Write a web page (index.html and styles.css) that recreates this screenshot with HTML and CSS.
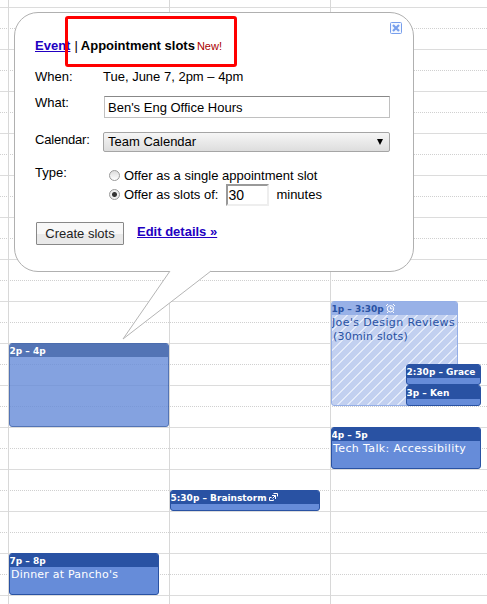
FILE: index.html
```html
<!DOCTYPE html>
<html lang="en">
<head>
<meta charset="utf-8">
<title>Calendar</title>
<link rel="stylesheet" href="styles.css">
</head>
<body>
<main class="calendar">
  <div class="day">
    <article class="event selected from-2p"><header><span class="time">2p – 4p</span></header></article>
    <article class="event from-7p"><header><span class="time">7p – 8p</span></header><p><span class="dinner">Dinner at Pancho's</span></p></article>
  </div>
  <div class="day">
    <article class="event brief from-530p"><header><span class="brain">5:30p – Brainstorm</span>
      <svg class="repeat" width="9" height="9" viewBox="0 0 9 9"><path d="M2.500 4.500h-2v3h4v-1M3 2.500h3.500V6M4.500.5h4v3M3.500 5.500l3-3" fill="none" stroke="#fff"/></svg></header></article>
  </div>
  <div class="day">
    <article class="event slots from-1p"><header><span class="slot-time">1p – 3:30p</span>
      <svg width="9" height="9" viewBox="0 0 9 9"><circle cx="4.500" cy="4.800" r="3.200" fill="none" stroke="#fff"/><path d="M4.500 2.800v2h2M0 2l2-2M7 0l2 2M1 9l1-1M8 9L7 8" fill="none" stroke="#fff"/></svg></header>
      <p><span class="joe">Joe's Design Reviews</span><br><span class="mins">(30min slots)</span></p></article>
    <article class="event brief booked from-230p"><header><span class="grace">2:30p – Grace</span></header></article>
    <article class="event brief booked from-3p"><header><span class="ken">3p – Ken</span></header></article>
    <article class="event wide from-4p"><header><span class="time">4p – 5p</span></header><p><span class="tech">Tech Talk: Accessibility</span></p></article>
  </div>
</main>
<section class="bubble">
  <svg class="close" width="12" height="12" viewBox="0 0 12 12"><rect x=".5" y=".5" width="11" height="11" rx="1" fill="#f4f8ff" stroke="#789fec"/><path d="M3 3l6 6M9 3l-6 6" stroke="#789fec" stroke-width="2.200"/></svg>
  <nav><a href="#">Event</a><span class="bar">|</span><b>Appointment slots</b><span class="new">New!</span></nav>
  <div class="row when"><span>When:</span><span class="date">Tue, June 7, 2pm – 4pm</span></div>
  <div class="row what"><span>What:</span><div class="input"><span>Ben's Eng Office Hours</span></div></div>
  <div class="row cal"><span class="cal-label">Calendar:</span><div class="select"><span>Team Calendar</span><svg width="6" height="6" viewBox="0 0 6 6"><path d="M0 0h6L3 6z"/></svg></div></div>
  <div class="row type"><span>Type:</span>
    <div class="choices">
      <label><i class="radio"></i><span class="single">Offer as a single appointment slot</span></label>
      <label><i class="radio on"></i><span class="of">Offer as slots of:</span><span class="number">30</span><span class="minutes">minutes</span></label>
    </div>
  </div>
  <div class="actions"><button>Create slots</button><a href="#">Edit details »</a></div>
  <svg class="tail" width="50" height="70" viewBox="0 0 50 70"><path d="M48 0L1 68 89 0" fill="#fff" stroke="#b5b5b5"/></svg>
</section>
<div class="highlight"></div>
</body>
</html>
```
FILE: styles.css
```css
* { box-sizing: border-box; }
body { margin: 0; width: 487px; height: 604px; overflow: hidden; position: relative; background: #fff; font: 13px "Liberation Sans", Arial, sans-serif; color: #000; }
.calendar {
  display: grid; grid-template-columns: 161px 161px 157px; height: 604px; padding-left: 8px;
  background:
    linear-gradient(to bottom, #dcdcdc 0 1px, transparent 1px) 0 7px / 100% 42px,
    repeating-linear-gradient(to right, transparent 0 1px, #fff 1px 2px),
    linear-gradient(to bottom, #d0d0d0 0 1px, transparent 1px) 0 28px / 100% 42px;
}
.day { display: grid; grid-template-rows: repeat(29, 21px); grid-template-columns: 100%; padding-top: 7px; border-left: 1px solid #d8d8d8; height: 604px; overflow: hidden; }
.event { grid-column: 1; width: 150px; border: 1px solid #2952a3; border-radius: 3px; background: #668cd9; color: #fff; overflow: hidden; font-family: "DejaVu Sans", Verdana, sans-serif; }
.event header { height: 13px; background: #2952a3; font-size: 9px; font-weight: bold; line-height: 14px; white-space: nowrap; display: flex; gap: 2px; align-items: center; }
.event header span { margin-left: -.5px; }
.event p { margin: 0; padding: 1px 0 0 0; font-size: 11px; line-height: 14px; letter-spacing: .38px; white-space: nowrap; }
.event .dinner { margin-left: 1px; letter-spacing: .22px; }
.event .tech { margin-left: 1px; }
.event .mins { margin-left: 1px; letter-spacing: .2px; }
.from-1p { grid-row: 15 / 20; }
.from-2p { grid-row: 17 / 21; }
.from-230p { grid-row: 18 / 19; }
.from-3p { grid-row: 19 / 20; }
.from-4p { grid-row: 21 / 23; }
.from-530p { grid-row: 24 / 25; }
.from-7p { grid-row: 27 / 29; }
.selected { width: 160px; opacity: .8; }
.slots { width: 127px; border-color: #94aee6; color: #2952a3; background: repeating-linear-gradient(135deg, #c2d0f0 0 5.600px, #e4ebfa 5.600px 7.070px); }
.slots header { background: #98b1e7; }
.booked { width: 75px; margin-left: 75px; }
.bubble { position: absolute; left: 14px; top: 12px; width: 400px; height: 260px; border: 1px solid #b0b0b0; border-radius: 24px; background: #fff; padding: 23px 23px 0 20px; }
.close { position: absolute; right: 11px; top: 9px; }
.tail { position: absolute; left: 107px; top: 258px; overflow: visible; }
nav { display: flex; height: 20px; line-height: 20px; font-weight: bold; white-space: nowrap; }
a { color: #2200c1; font-weight: bold; }
.bar { margin: 0 3px 0 4px; font-weight: normal; }
.new { margin-left: 2px; color: #a00; font-weight: normal; font-size: 11px; line-height: 21px; }
.row { display: grid; grid-template-columns: 68px 287px; white-space: nowrap; line-height: 16px; }
.when { margin-top: 13px; height: 26px; }
.what { height: 37px; }
.input { margin: 1px 0 0 1px; height: 22px; border: 1px solid #c0c0c0; border-top-color: #888; padding-left: 3px; line-height: 21px; }
.cal { height: 33px; }
.cal-label { letter-spacing: -.2px; }
.select { height: 20px; margin-top: 0; border: 1px solid #a5a5a5; border-radius: 2px; background: linear-gradient(#f6f6f6, #ddd); padding: 0 6px 0 4px; display: flex; justify-content: space-between; align-items: center; }
.type { height: 57px; }
.choices { padding: 1px 0 0 6px; }
label { display: flex; height: 19px; align-items: center; }
.radio { width: 11px; height: 11px; border: 1px solid #999; border-radius: 50%; margin-right: 4px; background: linear-gradient(#ddd, #fff); }
.on { background: radial-gradient(#333 0 2px, #eee 3px); }
.number { width: 43px; height: 22px; border: 2px solid #eee; border-top-color: #999; border-left-color: #999; font-size: 14px; line-height: 18px; margin: 0 8px; }
.minutes { margin-left: -1px; }
.actions { display: flex; align-items: flex-start; padding-left: 1px; }
button { width: 88px; height: 23px; border: 1px solid #888; border-radius: 1px; background: linear-gradient(#f8f8f8 50%, #e9e9e9 50%); font: inherit; color: #222; padding: 0; margin-right: 13px; white-space: nowrap; }
.actions a { line-height: 19px; white-space: nowrap; }
.highlight { position: absolute; left: 65px; top: 16px; width: 172px; height: 51px; border: 3px solid #f00; border-radius: 3px; }
```
